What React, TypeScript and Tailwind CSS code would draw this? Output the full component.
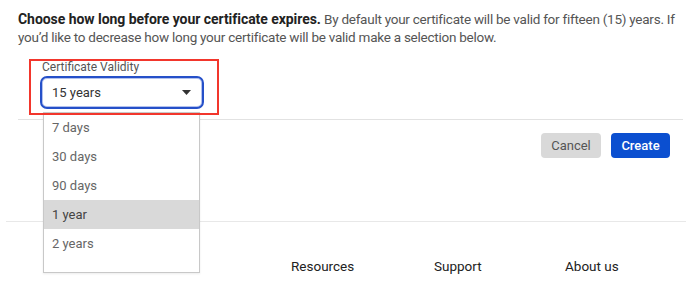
import React from "react";

const font = { fontFamily: "Roboto, 'Liberation Sans', sans-serif" };

export default function App() {
  const options = ["7 days", "30 days", "90 days", "1 year", "2 years"];
  return (
    <div className="relative w-[700px] h-[300px] overflow-hidden bg-white" style={font}>
      <p className="pt-[10px] pl-[18px] pr-[12px] text-[13.5px] leading-[18px] text-[#555] tracking-[-0.25px]">
        <span className="font-bold text-[14px] text-[#222] tracking-[-0.05px]">Choose how long before your certificate expires.</span>{" "}
        By default your certificate will be valid for fifteen (15) years. If you’d like to decrease how long your
        certificate will be valid make a selection below.
      </p>

      <div className="relative ml-[29px] mt-[13px] w-[190px] h-[56px] pl-[13px] pt-[2px]">
        <div className="text-[12px] leading-[13px] text-[#555]">Certificate Validity</div>
        <div className="relative -ml-[2px] mt-[2px] w-[164px]">
          <div className="flex items-center justify-between h-[33px] w-[164px] rounded-[7px] border-2 border-[#2550c9] shadow-[inset_0_0_0_1px_#b3c1ee] pl-[10px] pr-[11px]">
            <span className="text-[13px] text-[#333]">15 years</span>
            <svg width="9" height="5" viewBox="0 0 9 5">
              <path d="M0 0 L9 0 L4.5 5 Z" fill="#333" />
            </svg>
          </div>
          <div className="absolute z-10 left-[3px] top-[36px] w-[157px] h-[161px] border border-[#c8c8c8] bg-white shadow-[0_1px_2px_rgba(0,0,0,0.08)]">
            {options.map((o) => (
              <div
                key={o}
                className={`h-[29px] flex items-center pl-[8px] text-[13px] ${o === "1 year" ? "bg-[#d9d9d9] text-[#444]" : "text-[#666]"}`}
              >
                {o}
              </div>
            ))}
          </div>
        </div>
        <div className="pointer-events-none absolute inset-0 z-20 border-2 border-[#f2362c]" />
      </div>

      <div className="mt-[4px] ml-[18px] mr-[17px] h-px bg-[#e2e2e2]" />

      <div className="flex justify-end gap-[10px] mt-[13px] mr-[30px]">
        <button className="h-[25px] w-[60px] rounded-[4px] bg-[#d9d9d9] text-[13px] text-[#555]">Cancel</button>
        <button className="h-[25px] w-[59px] rounded-[4px] bg-[#0b4fd0] text-[13px] text-white font-medium">Create</button>
      </div>

      <div className="mt-[63px] ml-[6px] mr-[14px] h-px bg-[#e8e8e8]" />

      <div className="flex mt-[36px] pl-[291px] text-[13.5px] leading-[17px] text-[#222]">
        <div className="w-[143px]">Resources</div>
        <div className="w-[131px]">Support</div>
        <div>About us</div>
      </div>
    </div>
  );
}
